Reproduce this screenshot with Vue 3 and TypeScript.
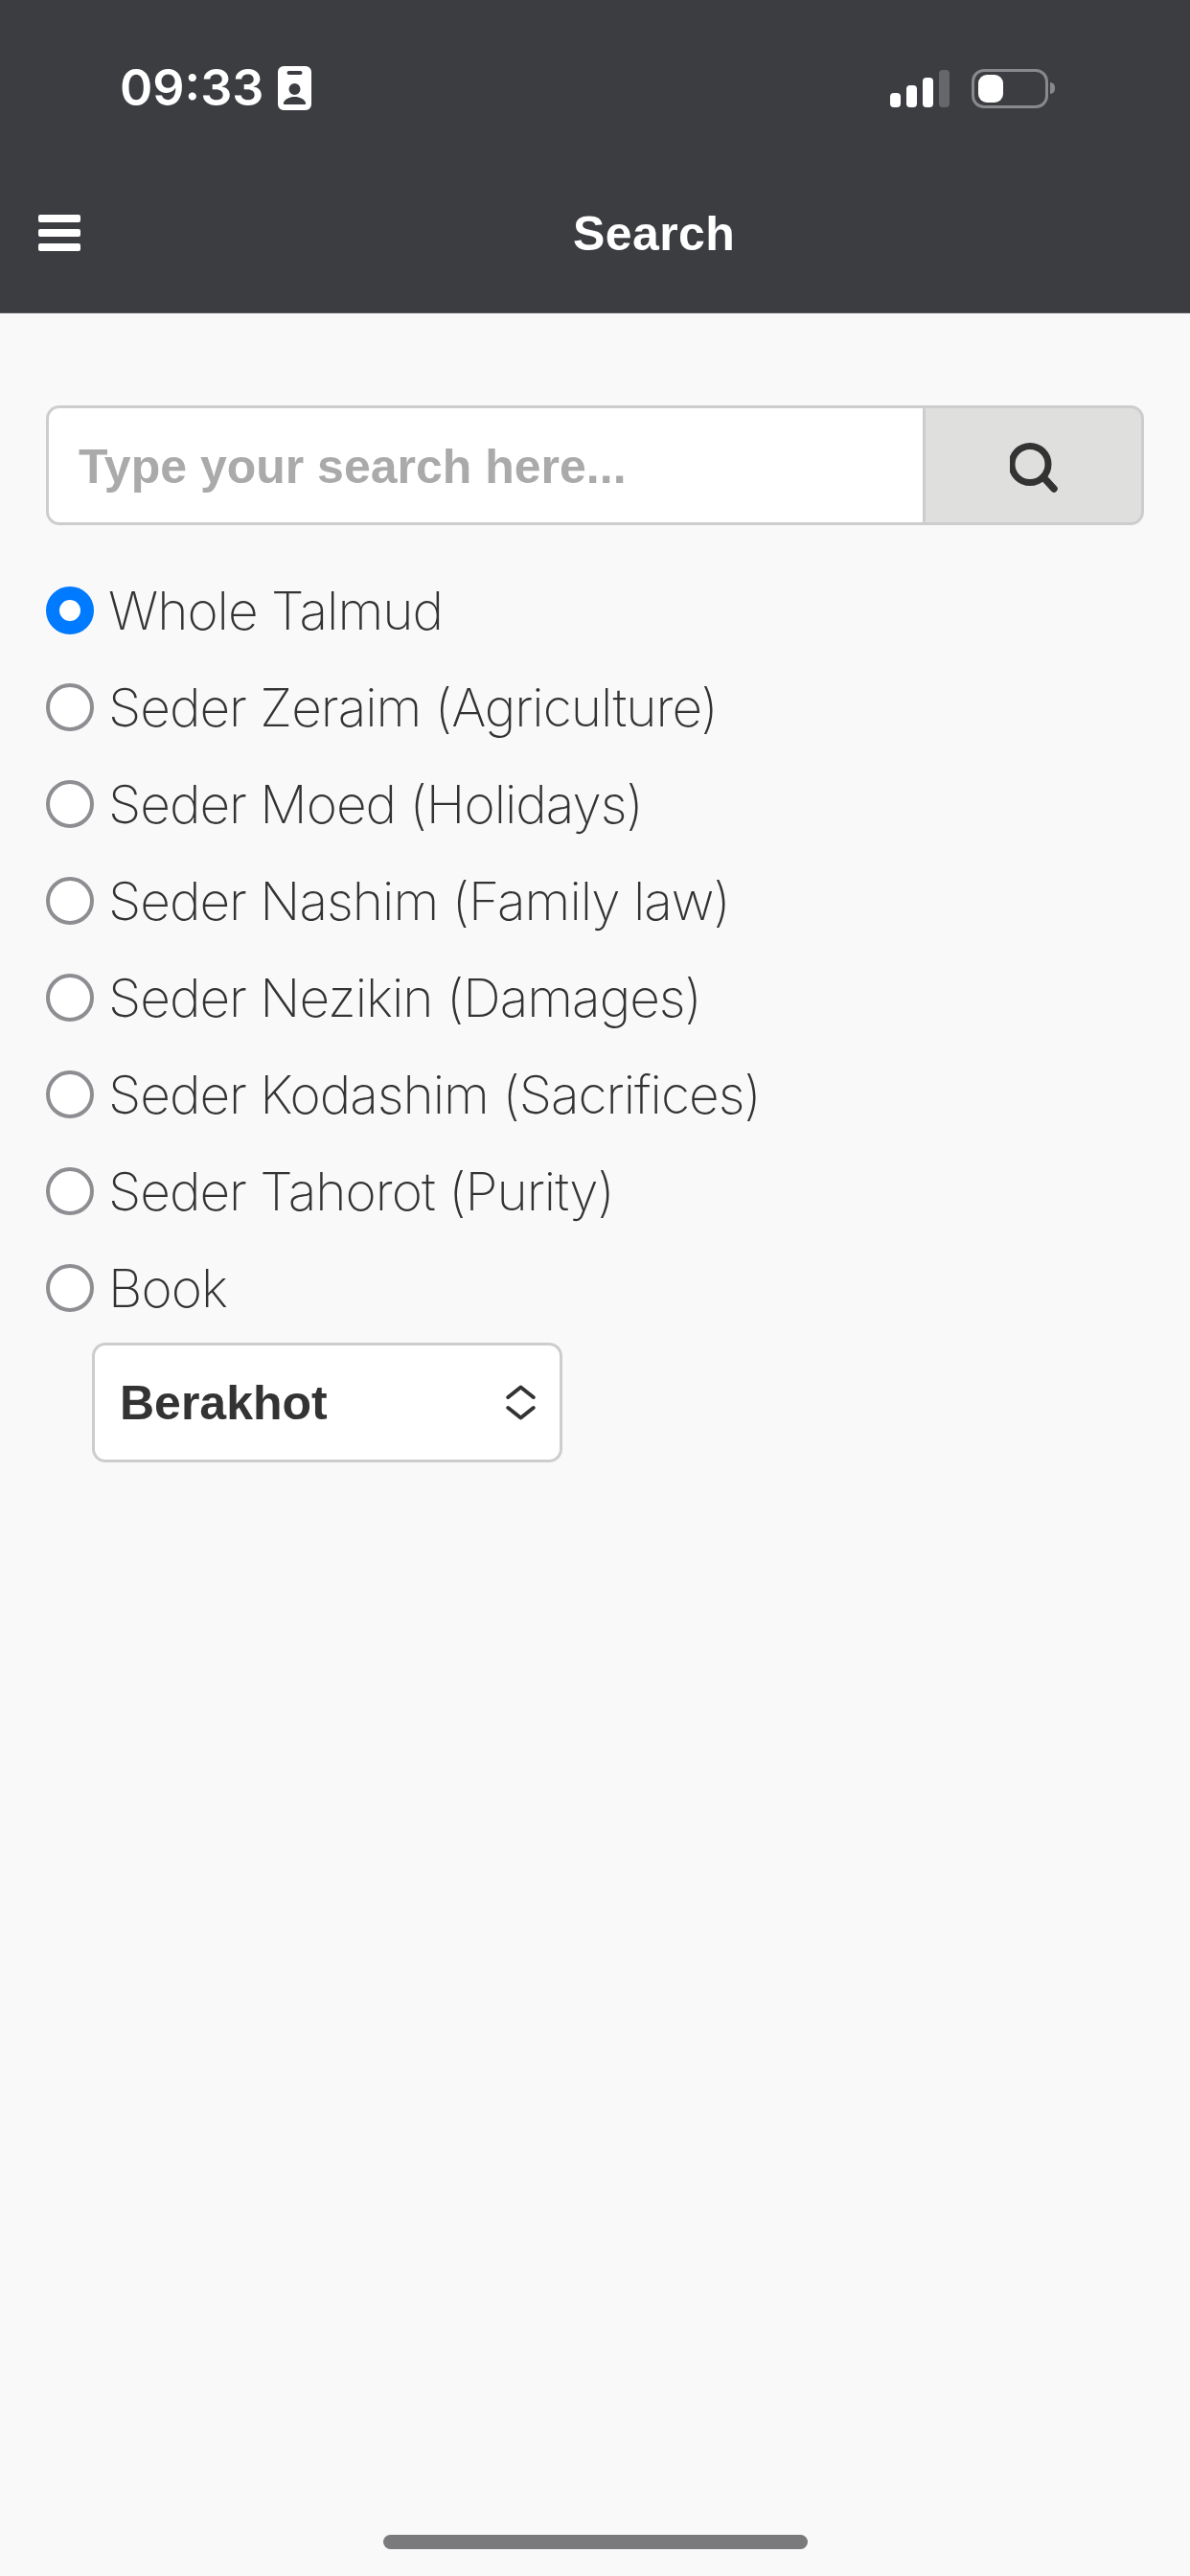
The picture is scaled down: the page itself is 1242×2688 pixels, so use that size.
<script setup lang="ts">
import { ref } from "vue";

const scopes = [
  "Whole Talmud",
  "Seder Zeraim (Agriculture)",
  "Seder Moed (Holidays)",
  "Seder Nashim (Family law)",
  "Seder Nezikin (Damages)",
  "Seder Kodashim (Sacrifices)",
  "Seder Tahorot (Purity)",
  "Book",
];

const selected = ref(scopes[0]);
const cellBars = [
  { id: 1, height: 15 },
  { id: 2, height: 23 },
  { id: 3, height: 31 },
];
</script>

<template>
  <div class="screen">
    <header class="app-header">
      <div class="status-bar">
        <div class="status-left">
          <span class="time">09:33</span>
          <svg class="badge-icon" width="35" height="46" viewBox="0 0 35 46">
            <path
              fill="#fff"
              fill-rule="evenodd"
              d="M6 0h23a6 6 0 0 1 6 6v34a6 6 0 0 1-6 6H6a6 6 0 0 1-6-6V6a6 6 0 0 1 6-6zM11.500 5a1.500 1.500 0 0 0 0 4h12a1.500 1.500 0 0 0 0-4zM17.500 18a6 6 0 1 0 0 12 6 6 0 0 0 0-12zM7 40h21c1 0 1.500-.7 1-2-1.500-3.500-6-6-11.500-6S7.500 34.500 6 38c-.5 1.300 0 2 1 2z"
            />
          </svg>
        </div>
        <div class="status-right">
          <div class="signal">
            <span
              v-for="bar in cellBars"
              :key="bar.id"
              class="signal-bar"
              :style="{ height: `${bar.height}px` }"
            />
            <span class="signal-bar off" />
          </div>
          <div class="battery">
            <div class="battery-body">
              <span class="battery-level" />
            </div>
            <span class="battery-cap" />
          </div>
        </div>
      </div>
      <div class="nav-bar">
        <div class="menu-icon">
          <span />
          <span />
          <span />
        </div>
        <h1>Search</h1>
      </div>
    </header>

    <main class="content">
      <form class="search-box" @submit.prevent>
        <input type="text" placeholder="Type your search here...">
        <button type="submit" aria-label="Search">
          <svg width="50" height="56" viewBox="0 0 50 56" fill="none">
            <circle cx="21" cy="26.500" r="19" stroke="#333" stroke-width="7" />
            <path d="M35 40l11 12" stroke="#333" stroke-width="7.500" stroke-linecap="round" />
          </svg>
        </button>
      </form>

      <div class="scope-list">
        <label
          v-for="scope in scopes"
          :key="scope"
          class="scope-row"
        >
          <input
            v-model="selected"
            type="radio"
            name="scope"
            :value="scope"
          >
          <span>{{ scope }}</span>
        </label>
      </div>

      <div class="book-select">
        <select aria-label="Book">
          <option>Berakhot</option>
        </select>
        <svg class="chevrons" width="31" height="37" viewBox="0 0 31 37" fill="none">
          <path
            d="M2.300 13L15.500 2.500 28.700 13M2.300 24l13.200 10.500L28.700 24"
            stroke="#333"
            stroke-width="4"
            stroke-linecap="round"
            stroke-linejoin="round"
          />
        </svg>
      </div>
    </main>

    <div class="home-indicator" />
  </div>
</template>

<style scoped>
.screen {
  position: relative;
  height: 2688px;
  overflow: hidden;
  background: #f9f9f9;
  font-family: Inter, "Liberation Sans", sans-serif;
  color: #333;
}

.app-header {
  height: 327px;
  box-sizing: border-box;
  border-bottom: 1px solid #5a5b5f;
  background: #3c3d41;
  color: #fff;
}

.status-bar {
  display: flex;
  justify-content: space-between;
  align-items: center;
  height: 108px;
  padding: 38px 0 0 125px;
  box-sizing: content-box;
}

.status-left {
  display: flex;
  align-items: center;
  gap: 15px;
}

.time {
  font-size: 52px;
  font-weight: 600;
  line-height: 64px;
}

.status-right {
  display: flex;
  align-items: center;
  gap: 23px;
  padding-right: 141px;
}

.signal {
  display: flex;
  align-items: flex-end;
  gap: 6px;
}

.signal-bar {
  width: 11px;
  border-radius: 4px;
  background: #fff;
}

.signal-bar.off {
  height: 39px;
  background: #66676b;
}

.battery {
  display: flex;
  align-items: center;
  gap: 2px;
}

.battery-body {
  display: flex;
  align-items: center;
  box-sizing: border-box;
  width: 80px;
  height: 41px;
  padding: 0 4px;
  border: 3px solid #88898c;
  border-radius: 13px;
}

.battery-level {
  width: 26px;
  height: 29px;
  border-radius: 9px;
  background: #fff;
}

.battery-cap {
  width: 5px;
  height: 12px;
  border-radius: 0 6px 6px 0;
  background: #88898c;
}

.nav-bar {
  display: flex;
  align-items: center;
  height: 100px;
  padding: 0 0 0 40px;
  margin-top: 47px;
}

.menu-icon {
  display: flex;
  flex-direction: column;
  gap: 7px;
  width: 44px;
}

.menu-icon span {
  height: 8px;
  border-radius: 2px;
  background: #fff;
}

h1 {
  margin: 2px 0 0 514px;
  font-family: "Liberation Sans", Arial, sans-serif;
  font-size: 50px;
  font-weight: 700;
  letter-spacing: 0.400px;
  line-height: 60px;
}

.content {
  padding: 96px 48px 0;
}

.search-box {
  display: flex;
  height: 125px;
}

.search-box input {
  flex: 1;
  min-width: 0;
  box-sizing: border-box;
  padding: 2px 31px 0;
  border: 3px solid #cdcdcd;
  border-right: 0;
  border-radius: 14px 0 0 14px;
  outline: none;
  background: #fff;
  font-family: "Liberation Sans", Arial, sans-serif;
  font-size: 50px;
  font-weight: 700;
}

.search-box input::placeholder {
  color: #aaa;
  opacity: 1;
}

.search-box button {
  display: flex;
  align-items: center;
  justify-content: center;
  width: 231px;
  padding: 0;
  border: 3px solid #cdcdcd;
  border-radius: 0 14px 14px 0;
  background: #dfe0de;
}

.scope-list {
  display: flex;
  flex-direction: column;
  margin-top: 38px;
}

.scope-row {
  display: flex;
  align-items: center;
  gap: 15px;
  height: 101px;
  font-size: 55px;
  font-weight: 200;
  letter-spacing: -1px;
}

.scope-row input {
  flex: none;
  appearance: none;
  box-sizing: border-box;
  width: 50px;
  height: 50px;
  margin: 0;
  border: 4px solid #8e8e92;
  border-radius: 50%;
  background: #fff;
}

.scope-row input:checked {
  border: 14px solid #007aff;
}

.book-select {
  position: relative;
  width: 491px;
  margin: 7px 0 0 48px;
}

.book-select select {
  display: block;
  appearance: none;
  box-sizing: border-box;
  width: 100%;
  height: 125px;
  padding: 0 26px;
  border: 3px solid #cdcdcd;
  border-radius: 14px;
  background: #fff;
  color: #333;
  font-family: "Liberation Sans", Arial, sans-serif;
  font-size: 50px;
  font-weight: 700;
}

.chevrons {
  position: absolute;
  top: 44px;
  right: 28px;
}

.home-indicator {
  position: absolute;
  bottom: 28px;
  left: 400px;
  width: 443px;
  height: 15px;
  border-radius: 8px;
  background: #7a7a7c;
}
</style>
